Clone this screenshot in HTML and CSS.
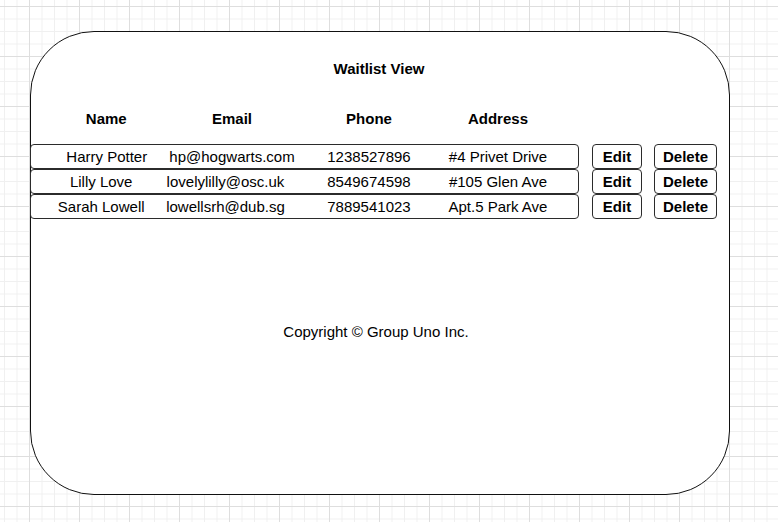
FILE: index.html
```html
<!DOCTYPE html>
<html lang="en">
<head>
<meta charset="utf-8">
<title>Waitlist View</title>
<link rel="stylesheet" href="styles.css">
</head>
<body>
<main class="panel">
  <h1 class="title">Waitlist View</h1>
  <div class="heads">
    <div class="cell">Name</div>
    <div class="cell">Email</div>
    <div class="cell">Phone</div>
    <div class="cell">Address</div>
  </div>
  <div class="list">
    <div class="row">
      <div class="rec">
        <div class="cell">Harry Potter</div>
        <div class="cell">hp@hogwarts.com</div>
        <div class="cell">1238527896</div>
        <div class="cell">#4 Privet Drive</div>
      </div>
      <button class="btn btn-edit">Edit</button>
      <button class="btn btn-del">Delete</button>
    </div>
    <div class="row">
      <div class="rec rec-alt">
        <div class="cell">Lilly Love</div>
        <div class="cell">lovelylilly@osc.uk</div>
        <div class="cell">8549674598</div>
        <div class="cell">#105 Glen Ave</div>
      </div>
      <button class="btn btn-edit">Edit</button>
      <button class="btn btn-del">Delete</button>
    </div>
    <div class="row">
      <div class="rec rec-alt">
        <div class="cell">Sarah Lowell</div>
        <div class="cell">lowellsrh@dub.sg</div>
        <div class="cell">7889541023</div>
        <div class="cell">Apt.5 Park Ave</div>
      </div>
      <button class="btn btn-edit">Edit</button>
      <button class="btn btn-del">Delete</button>
    </div>
  </div>
  <footer class="copy">Copyright © Group Uno Inc.</footer>
</main>
</body>
</html>
```

FILE: styles.css
```css
* { box-sizing: border-box; }

html { background: #fff; }

body {
  margin: 0;
  width: 778px;
  height: 522px;
  overflow: hidden;
  font-family: "Liberation Sans", Arial, sans-serif;
  color: #000;
  background-color: #fff;
  background-image:
    linear-gradient(to right, #dedede 1px, transparent 1px),
    linear-gradient(to bottom, #dedede 1px, transparent 1px),
    linear-gradient(to right, #f0f0f0 1px, transparent 1px),
    linear-gradient(to bottom, #f0f0f0 1px, transparent 1px);
  background-size: 50px 50px, 50px 50px, 12.5px 12.5px, 12.5px 12.5px;
  background-position: 29px 0, 0 6px, 4px 0, 0 6px;
  display: flex;
  flex-direction: column;
  align-items: flex-start;
  padding: 31px 0 0 30px;
}

.panel {
  width: 700px;
  height: 464px;
  background: #fff;
  border: 1px solid #111;
  border-radius: 64px;
  padding-top: 28px;
  display: flex;
  flex-direction: column;
}

.title {
  margin: 0;
  padding-right: 2px;
  font-size: 15px;
  line-height: 18px;
  font-weight: bold;
  text-align: center;
}

.heads {
  margin: 32px 0 0 -1px;
  height: 18px;
  display: grid;
  grid-template-columns: 152.6px 98.8px 175.2px 82.8px;
  font-size: 15px;
  line-height: 18px;
  font-weight: bold;
}

.cell {
  display: flex;
  justify-content: center;
  align-items: center;
  white-space: nowrap;
}

.list {
  margin: 16px 0 0 -1px;
  display: flex;
  flex-direction: column;
}

.row {
  display: flex;
  height: 25px;
}

.rec {
  width: 549px;
  height: 25px;
  border: 1px solid #2b2b2b;
  border-radius: 4px;
  display: grid;
  grid-template-columns: 151.6px 98.8px 175.2px 82.8px;
  font-size: 15px;
}

.rec-alt {
  grid-template-columns: 140.4px 108.2px 178.8px 79.2px;
}

.btn {
  height: 25px;
  margin: 0;
  padding: 0;
  background: #fff;
  border: 1px solid #2b2b2b;
  border-radius: 4px;
  font-family: "Liberation Sans", Arial, sans-serif;
  font-size: 15px;
  font-weight: bold;
  color: #000;
  line-height: 23px;
}

.btn-edit {
  width: 50px;
  margin-left: 13px;
}

.btn-del {
  width: 63px;
  margin-left: 12px;
}

.copy {
  margin-top: 104px;
  padding-right: 8px;
  font-size: 15px;
  line-height: 18px;
  text-align: center;
}
```
